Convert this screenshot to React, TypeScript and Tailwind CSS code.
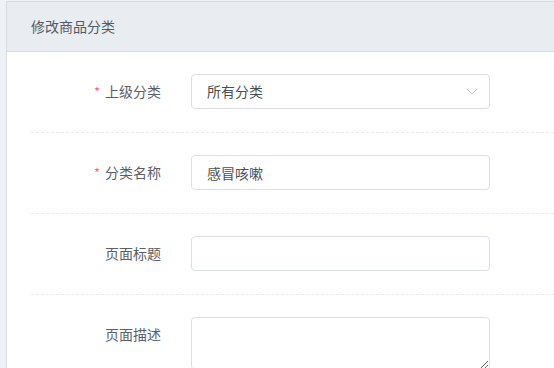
import React from 'react';

const font = { fontFamily: '"Noto Sans CJK SC", "Noto Sans", sans-serif' };

interface RowProps {
  label: string;
  required?: boolean;
  top?: boolean;
  children: React.ReactNode;
}

function FormRow({ label, required, top, children }: RowProps) {
  return (
    <div
      className={`flex ${top ? 'items-start' : 'items-center'} pt-[22px] pb-[23px] border-b border-dashed border-[#e8eaed]`}
    >
      <div className="w-[130px] h-[35px] flex items-center justify-end text-[14px] text-[#5a5e66]">
        {required && <span className="text-[#f56c6c] mr-[5px] text-[13px]">*</span>}
        {label}
      </div>
      <div className="ml-[30px]">{children}</div>
    </div>
  );
}

export default function App() {
  return (
    <div className="w-full h-[368px] bg-[#eef1f5] pl-[6px] pt-[1px] overflow-hidden" style={font}>
      <div className="bg-white border-l border-t border-[#d7dce2] h-full">
        <div className="h-[50px] bg-[#e9edf1] border-b border-[#d7dce2] flex items-center pl-[24px] text-[14px] text-[#555a60]">
          修改商品分类
        </div>

        <div className="pl-[24px]">
          <FormRow label="上级分类" required>
            <div className="w-[299px] h-[35px] border border-[#dcdbe6] rounded-[4px] flex items-center justify-between pl-[15px] pr-[11px] text-[14px] text-[#4a4d52]">
              <span>所有分类</span>
              <svg width="12" height="7" viewBox="0 0 12 7" fill="none">
                <path d="M0.5 0.5 L6 6 L11.5 0.5" stroke="#c0c4cc" strokeWidth="1" />
              </svg>
            </div>
          </FormRow>

          <FormRow label="分类名称" required>
            <input
              defaultValue="感冒咳嗽"
              className="w-[299px] h-[35px] border border-[#dcdfe6] rounded-[4px] px-[15px] text-[14px] text-[#4a4d52] outline-none"
              style={font}
            />
          </FormRow>

          <FormRow label="页面标题">
            <input
              className="w-[299px] h-[35px] border border-[#dcdfe6] rounded-[4px] px-[15px] text-[14px] text-[#4a4d52] outline-none"
              style={font}
            />
          </FormRow>

          <FormRow label="页面描述" top>
            <textarea
              className="block w-[299px] h-[53px] border border-[#dcdfe6] rounded-[4px] px-[15px] py-[6px] text-[14px] text-[#4a4d52] outline-none"
              style={font}
            />
          </FormRow>
        </div>
      </div>
    </div>
  );
}
